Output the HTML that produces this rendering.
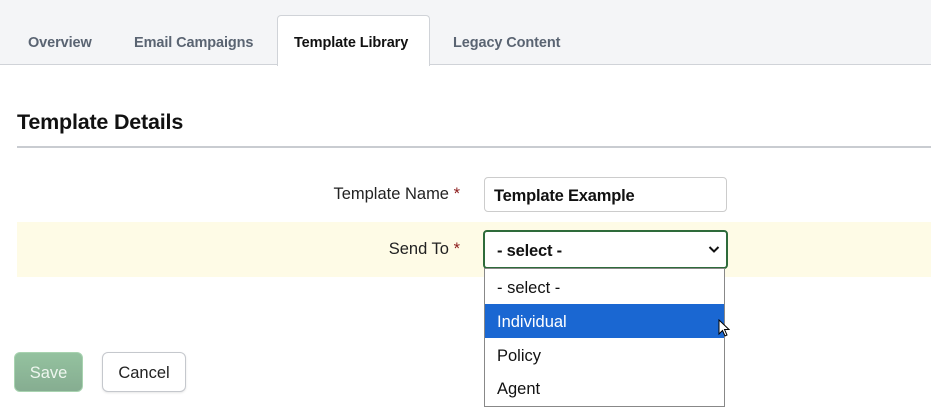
<!DOCTYPE html>
<html><head><style>
*{box-sizing:border-box;margin:0;padding:0}
body{width:931px;height:419px;background:#fff;font-family:"Liberation Sans",sans-serif;position:relative;overflow:hidden;color:#111}
.bar{position:absolute;left:0;top:0;width:931px;height:65px;background:#f4f5f7;border-bottom:1px solid #d0d3d8}
.tab{position:absolute;top:35px;font-size:14.5px;font-weight:bold;color:#5a6472;letter-spacing:-0.1px}
.act{position:absolute;left:277px;top:15px;width:153px;height:51px;background:#fff;border:1px solid #d0d3d8;border-bottom:none;border-radius:4px 4px 0 0}
h2{position:absolute;left:17px;top:110px;font-size:21.5px;font-weight:bold;letter-spacing:-0.2px}
.rule{position:absolute;left:17px;top:146px;width:914px;height:2px;background:#c9ccd1}
.lbl{position:absolute;font-size:16.5px;color:#222;text-align:right;width:300px}
.lbl b{color:#8b1a1a;font-weight:normal}
.inp{position:absolute;left:484px;top:177px;width:243px;height:35px;border:1px solid #ccc;border-radius:4px;font-weight:bold;font-size:16.5px;padding:9px 9px;letter-spacing:-0.2px}
.yel{position:absolute;left:17px;top:222px;width:914px;height:55px;background:#fefbe6}
.sel{position:absolute;left:483px;top:230px;width:245px;height:39px;border:2px solid #2e6b3a;border-radius:4px;background:#fff;font-weight:bold;font-size:16.5px;padding:10px 12px;letter-spacing:-0.2px}
.dd{position:absolute;left:484px;top:268px;width:241px;height:139px;border:1px solid #888;background:#fff}
.opt{position:absolute;left:0;width:239px;height:34px;font-size:16.5px;padding:9px 12px}
.btn{position:absolute;top:352px;height:40px;border-radius:6px;font-size:16.5px;text-align:center;padding-top:11px}
</style></head><body>
<div class="bar"></div>
<div class="act"></div>
<div class="tab" style="left:28px">Overview</div>
<div class="tab" style="left:134px">Email Campaigns</div>
<div class="tab" style="left:294px;color:#111">Template Library</div>
<div class="tab" style="left:453px">Legacy Content</div>
<h2>Template Details</h2>
<div class="rule"></div>
<div class="lbl" style="left:160px;top:185px">Template Name <b>*</b></div>
<div class="inp">Template Example</div>
<div class="yel"></div>
<div class="lbl" style="left:160px;top:240px">Send To <b>*</b></div>
<div class="sel">- select -<svg style="position:absolute;right:6px;top:13px" width="12" height="9" viewBox="0 0 12 9"><path d="M1.5 2 L6 6.5 L10.5 2" stroke="#111" stroke-width="2" fill="none"/></svg></div>
<div class="dd">
<div class="opt" style="top:1px">- select -</div>
<div class="opt" style="top:35px;background:#1a67d2;color:#fff">Individual</div>
<div class="opt" style="top:69px">Policy</div>
<div class="opt" style="top:102px">Agent</div>
</div>
<svg style="position:absolute;left:718px;top:319px" width="12" height="20" viewBox="0 0 12 20"><path d="M1 1 L1 15 L4.5 11.5 L7 17 L9 16 L6.5 10.5 L11 10.5 Z" fill="#fff" stroke="#000" stroke-width="1"/></svg>
<div class="btn" style="left:14px;width:69px;background:linear-gradient(#94c29f,#86ad91);border:1px solid #a8d3b0;color:#eef6ef">Save</div>
<div class="btn" style="left:102px;width:84px;background:#fff;border:1px solid #c5c8cd;color:#222;box-shadow:0 1px 2px rgba(0,0,0,.1)">Cancel</div>
</body></html>
